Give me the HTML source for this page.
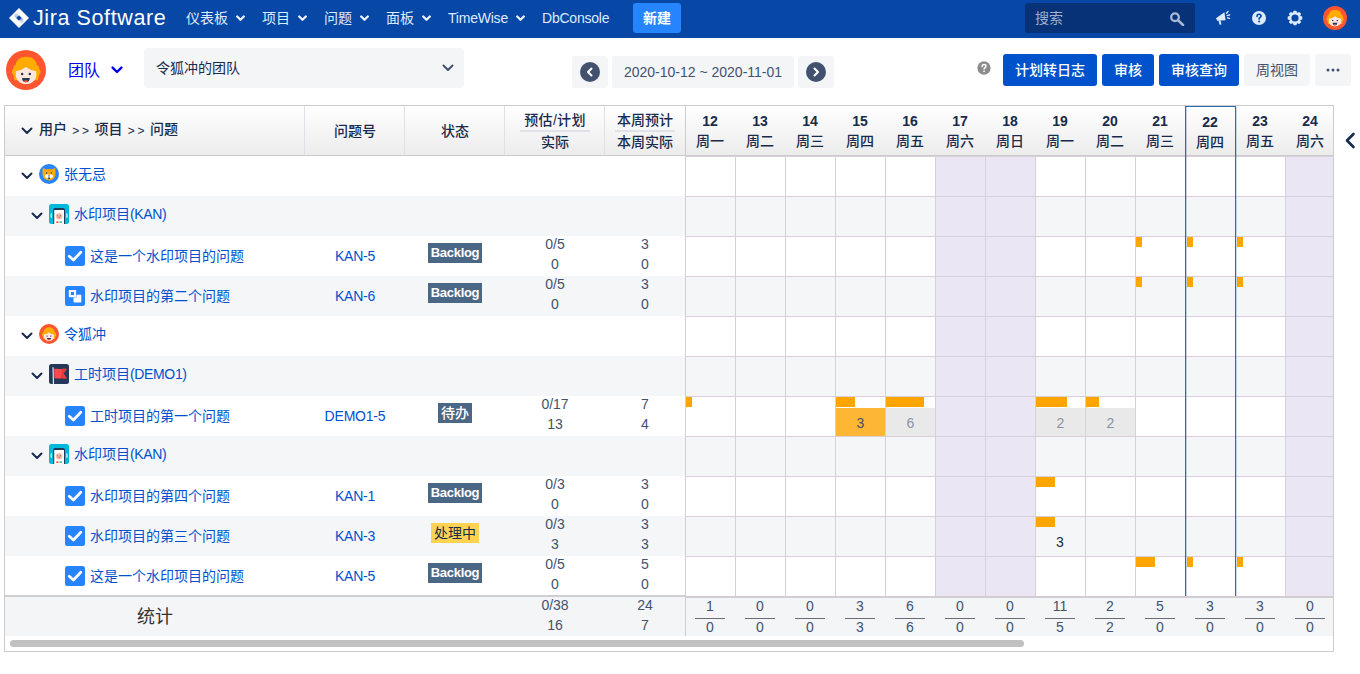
<!DOCTYPE html><html lang="zh-CN"><head><meta charset="utf-8"><title>TimeWise</title><style>
*{box-sizing:border-box;margin:0;padding:0}
html,body{width:1360px;height:674px;overflow:hidden;background:#fff}
body{font-family:"Liberation Sans","Noto Sans CJK SC",sans-serif;font-size:14px;color:#172b4d;position:relative}
.abs{position:absolute}
#nav{position:absolute;left:0;top:0;width:1360px;height:38px;background:#0747a6}
#nav .it{position:absolute;top:0;height:36px;line-height:36px;color:#deebff;font-size:14px;white-space:nowrap}
#nav svg.chv{position:absolute;top:15px}
.btnp{position:absolute;top:54px;height:32px;line-height:32px;border-radius:3px;background:#0052cc;color:#fff;font-weight:500;font-size:14px;text-align:center;white-space:nowrap}
.btng{position:absolute;top:54px;height:32px;line-height:32px;border-radius:3px;background:#f4f5f7;color:#42526e;font-size:14px;text-align:center;white-space:nowrap}
#tbl{position:absolute;left:4px;top:105px;width:1330px;height:547px;border:1px solid #ccc;overflow:hidden;background:#fff}
.row{position:absolute;left:0;width:1328px;height:40px}
.g{background:#f5f6f8}
.lnk{color:#0052cc;letter-spacing:-0.2px}
.c{position:absolute;text-align:center;white-space:nowrap}
.num{color:#42526e;font-size:14px}
.lab{position:absolute;font-size:14px;color:#0052cc;white-space:nowrap;line-height:20px}
.st{position:absolute;height:20px;line-height:19px;font-size:14px;font-weight:bold;color:#fff;background:#42526e;padding:0 3px;white-space:nowrap}
.bar{position:absolute;height:10px;background:#ffa500}
.hd{position:absolute;font-weight:500;font-size:14px;color:#172b4d;text-align:center;white-space:nowrap;line-height:20px}
</style></head><body>
<div id="nav">
<svg class="abs" style="left:8px;top:7px" width="22" height="22" viewBox="0 0 22 22">
<defs><linearGradient id="lg1" x1="0" y1="0" x2="0" y2="1"><stop offset="0" stop-color="#0747a6" stop-opacity="0"/><stop offset="1" stop-color="#0747a6" stop-opacity="0.45"/></linearGradient>
<linearGradient id="lg2" x1="0" y1="1" x2="0" y2="0"><stop offset="0" stop-color="#0747a6" stop-opacity="0"/><stop offset="1" stop-color="#0747a6" stop-opacity="0.45"/></linearGradient></defs>
<path d="M11 1 L21 11 L11 21 L1 11Z" fill="#fff"/>
<path d="M6.6 6.4 L9.9 4.4 L9.9 9.3 L8.2 11 L6.6 9.4Z" fill="url(#lg1)"/>
<path d="M15.4 15.6 L12.1 17.6 L12.1 12.7 L13.8 11 L15.4 12.6Z" fill="url(#lg2)"/>
<path d="M11 8.2 L13.8 11 L11 13.8 L8.2 11Z" fill="#0747a6"/>
</svg>
<div class="abs" style="left:33px;top:0;height:36px;line-height:36px;color:#fff;font-size:21.5px;letter-spacing:0.6px;white-space:nowrap">Jira Software</div>
<div class="it" style="left:186px">仪表板</div>
<svg class="chv" style="left:236px" width="9" height="7" viewBox="0 0 9 7"><path d="M1.2 1.5 L4.5 4.8 L7.8 1.5" fill="none" stroke="#eef3ff" stroke-width="2.3" stroke-linecap="round" stroke-linejoin="round"/></svg>
<div class="it" style="left:262px">项目</div>
<svg class="chv" style="left:298px" width="9" height="7" viewBox="0 0 9 7"><path d="M1.2 1.5 L4.5 4.8 L7.8 1.5" fill="none" stroke="#eef3ff" stroke-width="2.3" stroke-linecap="round" stroke-linejoin="round"/></svg>
<div class="it" style="left:324px">问题</div>
<svg class="chv" style="left:360px" width="9" height="7" viewBox="0 0 9 7"><path d="M1.2 1.5 L4.5 4.8 L7.8 1.5" fill="none" stroke="#eef3ff" stroke-width="2.3" stroke-linecap="round" stroke-linejoin="round"/></svg>
<div class="it" style="left:386px">面板</div>
<svg class="chv" style="left:422px" width="9" height="7" viewBox="0 0 9 7"><path d="M1.2 1.5 L4.5 4.8 L7.8 1.5" fill="none" stroke="#eef3ff" stroke-width="2.3" stroke-linecap="round" stroke-linejoin="round"/></svg>
<div class="it" style="left:448px;letter-spacing:-0.22px">TimeWise</div>
<svg class="chv" style="left:516px" width="9" height="7" viewBox="0 0 9 7"><path d="M1.2 1.5 L4.5 4.8 L7.8 1.5" fill="none" stroke="#eef3ff" stroke-width="2.3" stroke-linecap="round" stroke-linejoin="round"/></svg>
<div class="it" style="left:542px;letter-spacing:-0.22px">DbConsole</div>
<div class="abs" style="left:633px;top:3px;width:48px;height:30px;line-height:31px;border-radius:3px;background:#2684ff;color:#fff;font-weight:bold;font-size:14px;text-align:center">新建</div>
<div class="abs" style="left:1025px;top:3px;width:170px;height:30px;border-radius:3px;background:#083277"></div>
<div class="abs" style="left:1035px;top:3px;height:30px;line-height:31px;color:#9fb0cc;font-size:14px">搜索</div>
<svg class="abs" style="left:1169px;top:10px" width="16" height="16" viewBox="0 0 16 16"><circle cx="6" cy="7.2" r="3.8" fill="none" stroke="#a9b8d4" stroke-width="2.3"/><path d="M9.2 10.4 L14 15" stroke="#a9b8d4" stroke-width="2.6" stroke-linecap="round"/></svg>
<svg class="abs" style="left:1215px;top:10px" width="16" height="16" viewBox="0 0 16 16">
<path d="M1 8.3 L9.4 2.2 L10.6 10.2 L2.2 10.8Z" fill="#deebff"/>
<path d="M3.4 10.6 L5.6 10.4 L6.4 14.4 L4.6 14.8Z" fill="#deebff"/>
<path d="M11.6 3.2 L13 1.4 M12.2 5.6 L14.6 4.8 M12.6 7.8 L14.6 8.4" stroke="#deebff" stroke-width="1.4" stroke-linecap="round"/>
</svg>
<svg class="abs" style="left:1251px;top:10px" width="16" height="16" viewBox="0 0 16 16"><circle cx="8" cy="8" r="7" fill="#deebff"/>
<path d="M6 6.4 C6 5 6.9 4.3 8.1 4.3 C9.3 4.3 10.1 5 10.1 6.1 C10.1 7.4 8.1 7.6 8.1 9.1" fill="none" stroke="#0747a6" stroke-width="1.6" stroke-linecap="round"/><circle cx="8.1" cy="11.5" r="1" fill="#0747a6"/></svg>
<svg class="abs" style="left:1286px;top:9px" width="18" height="18" viewBox="0 0 18 18">
<g fill="#deebff"><circle cx="9" cy="9" r="5.9"/><rect x="7.3" y="1.7" width="3.4" height="3" rx="0.7" transform="rotate(0 9 9)"/><rect x="7.3" y="1.7" width="3.4" height="3" rx="0.7" transform="rotate(45 9 9)"/><rect x="7.3" y="1.7" width="3.4" height="3" rx="0.7" transform="rotate(90 9 9)"/><rect x="7.3" y="1.7" width="3.4" height="3" rx="0.7" transform="rotate(135 9 9)"/><rect x="7.3" y="1.7" width="3.4" height="3" rx="0.7" transform="rotate(180 9 9)"/><rect x="7.3" y="1.7" width="3.4" height="3" rx="0.7" transform="rotate(225 9 9)"/><rect x="7.3" y="1.7" width="3.4" height="3" rx="0.7" transform="rotate(270 9 9)"/><rect x="7.3" y="1.7" width="3.4" height="3" rx="0.7" transform="rotate(315 9 9)"/></g>
<circle cx="9" cy="9" r="3.6" fill="#0747a6"/></svg>
<svg class="abs" style="left:1323px;top:6px" width="24" height="24" viewBox="0 0 40 40">
<circle cx="20" cy="20" r="20" fill="#ff5630"/>
<path d="M10.8 30.2 L8.6 30.2 C7.6 27.6 8 25.6 7.1 24.6 C5.3 23 5.5 20 7.3 19 C7 17 8 15.5 9.6 15 C10.2 10 14.2 6.7 20 6.7 C26.3 6.7 30.3 10 30.9 15 C32.5 15.5 33.4 17 33.1 19 C34.9 20 35.1 23 33.3 24.6 C32.4 25.6 32.8 27.6 31.8 30.2 L29.6 30.2Z" fill="#ffab00"/>
<path d="M9.8 21.2 Q15.5 20.6 19.9 17 Q24.5 20.6 30.3 21.2 L30.3 25 C30.3 30.4 25.6 34.1 20.05 34.1 C14.5 34.1 9.8 30.4 9.8 25Z" fill="#ffe6dc"/>
<circle cx="16.1" cy="24.1" r="1.25" fill="#253858"/><circle cx="23.8" cy="24.1" r="1.25" fill="#253858"/>
<path d="M16 27.9 L23.8 27.9 C23.8 30.6 22.1 32.3 19.9 32.3 C17.7 32.3 16 30.6 16 27.9Z" fill="#253858"/>
<path d="M17.7 31 C18.8 29.9 21 29.9 22.1 31 C21.4 32 20.6 32.3 19.9 32.3 C19.2 32.3 18.4 32 17.7 31Z" fill="#ff5630"/>
</svg>
</div>
<svg class="abs" style="left:6px;top:50px" width="40" height="40" viewBox="0 0 40 40">
<circle cx="20" cy="20" r="20" fill="#ff5630"/>
<path d="M10.8 30.2 L8.6 30.2 C7.6 27.6 8 25.6 7.1 24.6 C5.3 23 5.5 20 7.3 19 C7 17 8 15.5 9.6 15 C10.2 10 14.2 6.7 20 6.7 C26.3 6.7 30.3 10 30.9 15 C32.5 15.5 33.4 17 33.1 19 C34.9 20 35.1 23 33.3 24.6 C32.4 25.6 32.8 27.6 31.8 30.2 L29.6 30.2Z" fill="#ffab00"/>
<path d="M9.8 21.2 Q15.5 20.6 19.9 17 Q24.5 20.6 30.3 21.2 L30.3 25 C30.3 30.4 25.6 34.1 20.05 34.1 C14.5 34.1 9.8 30.4 9.8 25Z" fill="#ffe6dc"/>
<circle cx="16.1" cy="24.1" r="1.25" fill="#253858"/><circle cx="23.8" cy="24.1" r="1.25" fill="#253858"/>
<path d="M16 27.9 L23.8 27.9 C23.8 30.6 22.1 32.3 19.9 32.3 C17.7 32.3 16 30.6 16 27.9Z" fill="#253858"/>
<path d="M17.7 31 C18.8 29.9 21 29.9 22.1 31 C21.4 32 20.6 32.3 19.9 32.3 C19.2 32.3 18.4 32 17.7 31Z" fill="#ff5630"/>
</svg>
<div class="abs" style="left:68px;top:60px;font-size:16px;line-height:22px;color:#0000ee;white-space:nowrap">团队</div>
<svg class="abs" style="left:111px;top:66px" width="12" height="9" viewBox="0 0 12 9"><path d="M1.6 1.6 L6 6 L10.4 1.6" fill="none" stroke="#0000ee" stroke-width="2.4" stroke-linecap="round" stroke-linejoin="round"/></svg>
<div class="abs" style="left:144px;top:48px;width:320px;height:40px;border-radius:3px;background:#f4f5f7"></div>
<div class="abs" style="left:156px;top:48px;height:40px;line-height:41px;font-size:14px;color:#172b4d">令狐冲的团队</div>
<svg class="abs" style="left:442px;top:64px" width="12" height="8" viewBox="0 0 12 8"><path d="M1.5 1.5 L6 6 L10.5 1.5" fill="none" stroke="#42526e" stroke-width="2" stroke-linecap="round" stroke-linejoin="round"/></svg>
<div class="abs" style="left:572px;top:56px;width:36px;height:32px;border-radius:3px;background:#f4f5f7"></div>
<svg class="abs" style="left:580px;top:62px" width="20" height="20" viewBox="0 0 20 20"><circle cx="10" cy="10" r="10" fill="#42526e"/><path d="M11.5 6.5 L8 10 L11.5 13.5" fill="none" stroke="#fff" stroke-width="2" stroke-linecap="round" stroke-linejoin="round"/></svg>
<div class="abs" style="left:612px;top:56px;width:182px;height:32px;line-height:32px;border-radius:3px;background:#f4f5f7;color:#42526e;font-size:14px;text-align:center;white-space:nowrap">2020-10-12 ~ 2020-11-01</div>
<div class="abs" style="left:798px;top:56px;width:36px;height:32px;border-radius:3px;background:#f4f5f7"></div>
<svg class="abs" style="left:806px;top:62px" width="20" height="20" viewBox="0 0 20 20"><circle cx="10" cy="10" r="10" fill="#42526e"/><path d="M8.5 6.5 L12 10 L8.5 13.5" fill="none" stroke="#fff" stroke-width="2" stroke-linecap="round" stroke-linejoin="round"/></svg>
<svg class="abs" style="left:977px;top:61px" width="14" height="14" viewBox="0 0 16 16"><circle cx="8" cy="8" r="7.6" fill="#8c8c8c"/>
<path d="M5.9 6.3 C5.9 4.9 6.9 4.1 8.1 4.1 C9.3 4.1 10.2 4.9 10.2 6 C10.2 7.4 8.1 7.6 8.1 9.2" fill="none" stroke="#fff" stroke-width="1.7" stroke-linecap="round"/><circle cx="8.1" cy="11.8" r="1.05" fill="#fff"/></svg>
<div class="btnp" style="left:1003px;width:94px">计划转日志</div>
<div class="btnp" style="left:1102px;width:52px">审核</div>
<div class="btnp" style="left:1159px;width:80px">审核查询</div>
<div class="btng" style="left:1244px;width:66px">周视图</div>
<div class="btng" style="left:1315px;width:36px"></div>
<svg class="abs" style="left:1326px;top:68px" width="14" height="4" viewBox="0 0 14 4"><circle cx="2" cy="2" r="1.5" fill="#42526e"/><circle cx="7" cy="2" r="1.5" fill="#42526e"/><circle cx="12" cy="2" r="1.5" fill="#42526e"/></svg>
<svg class="abs" style="left:1344px;top:132px" width="12" height="17" viewBox="0 0 12 17"><path d="M9.5 2 L3 8.5 L9.5 15" fill="none" stroke="#172b4d" stroke-width="2.6" stroke-linecap="round" stroke-linejoin="round"/></svg>
<div id="tbl">
<div class="abs" style="left:0;top:0;width:1328px;height:49px;background:linear-gradient(#ffffff 0%,#ececec 100%)"></div>
<div class="abs" style="left:0;top:49px;width:1328px;height:1px;background:#ccc"></div>
<div class="abs" style="left:299px;top:0;width:1px;height:49px;background:#dfe1e6"></div>
<div class="abs" style="left:399px;top:0;width:1px;height:49px;background:#dfe1e6"></div>
<div class="abs" style="left:499px;top:0;width:1px;height:49px;background:#dfe1e6"></div>
<div class="abs" style="left:599px;top:0;width:1px;height:49px;background:#dfe1e6"></div>
<div class="abs" style="left:680px;top:0;width:1px;height:49px;background:#ccc"></div>
<svg class="abs" style="left:16px;top:21px" width="12" height="8" viewBox="0 0 12 8"><path d="M1.5 1.5 L6 6 L10.5 1.5" fill="none" stroke="#172b4d" stroke-width="2" stroke-linecap="round" stroke-linejoin="round"/></svg>
<div class="hd" style="left:34px;top:13px;text-align:left">用户</div>
<div class="hd" style="left:67.2px;top:14.5px;text-align:left;font-weight:normal;font-size:12px;letter-spacing:2.7px">&gt;&gt;</div>
<div class="hd" style="left:89.5px;top:13px;text-align:left">项目</div>
<div class="hd" style="left:122.7px;top:14.5px;text-align:left;font-weight:normal;font-size:12px;letter-spacing:2.7px">&gt;&gt;</div>
<div class="hd" style="left:145px;top:13px;text-align:left">问题</div>
<div class="hd" style="left:300px;width:100px;top:15px">问题号</div>
<div class="hd" style="left:400px;width:100px;top:15px">状态</div>
<div class="hd" style="left:500px;width:100px;top:4px;letter-spacing:0.3px">预估/计划</div>
<div class="abs" style="left:515px;top:24px;width:70px;height:2px;background:#e0e2e7"></div>
<div class="hd" style="left:500px;width:100px;top:26px">实际</div>
<div class="hd" style="left:600px;width:80px;top:4px">本周预计</div>
<div class="abs" style="left:610px;top:24px;width:60px;height:2px;background:#e0e2e7"></div>
<div class="hd" style="left:600px;width:80px;top:26px">本周实际</div>
<div class="hd" style="left:680px;width:50px;top:5px;font-weight:bold">12</div>
<div class="hd" style="left:680px;width:50px;top:24.5px">周一</div>
<div class="hd" style="left:730px;width:50px;top:5px;font-weight:bold">13</div>
<div class="hd" style="left:730px;width:50px;top:24.5px">周二</div>
<div class="hd" style="left:780px;width:50px;top:5px;font-weight:bold">14</div>
<div class="hd" style="left:780px;width:50px;top:24.5px">周三</div>
<div class="hd" style="left:830px;width:50px;top:5px;font-weight:bold">15</div>
<div class="hd" style="left:830px;width:50px;top:24.5px">周四</div>
<div class="hd" style="left:880px;width:50px;top:5px;font-weight:bold">16</div>
<div class="hd" style="left:880px;width:50px;top:24.5px">周五</div>
<div class="hd" style="left:930px;width:50px;top:5px;font-weight:bold">17</div>
<div class="hd" style="left:930px;width:50px;top:24.5px">周六</div>
<div class="hd" style="left:980px;width:50px;top:5px;font-weight:bold">18</div>
<div class="hd" style="left:980px;width:50px;top:24.5px">周日</div>
<div class="hd" style="left:1030px;width:50px;top:5px;font-weight:bold">19</div>
<div class="hd" style="left:1030px;width:50px;top:24.5px">周一</div>
<div class="hd" style="left:1080px;width:50px;top:5px;font-weight:bold">20</div>
<div class="hd" style="left:1080px;width:50px;top:24.5px">周二</div>
<div class="hd" style="left:1130px;width:50px;top:5px;font-weight:bold">21</div>
<div class="hd" style="left:1130px;width:50px;top:24.5px">周三</div>
<div class="hd" style="left:1180px;width:50px;top:6px;font-weight:bold">22</div>
<div class="hd" style="left:1180px;width:50px;top:25.5px">周四</div>
<div class="hd" style="left:1230px;width:50px;top:5px;font-weight:bold">23</div>
<div class="hd" style="left:1230px;width:50px;top:24.5px">周五</div>
<div class="hd" style="left:1280px;width:50px;top:5px;font-weight:bold">24</div>
<div class="hd" style="left:1280px;width:50px;top:24.5px">周六</div>
<div class="row" style="top:50px">
<svg class="abs" style="left:16px;top:16px" width="12" height="8" viewBox="0 0 12 8"><path d="M1.5 1.5 L6 6 L10.5 1.5" fill="none" stroke="#172b4d" stroke-width="2" stroke-linecap="round" stroke-linejoin="round"/></svg>
<svg class="abs" style="left:34px;top:8px" width="20" height="20" viewBox="0 0 20 20">
<circle cx="10" cy="10" r="10" fill="#2684ff"/>
<path d="M3.9 4 L7.2 5.4 C9 4.9 11 4.9 12.8 5.4 L16.1 4 C16.6 6.5 16.7 9 16.3 11.5 C15.8 14.6 13.4 16.4 10 16.4 C6.6 16.4 4.2 14.6 3.7 11.5 C3.3 9 3.4 6.5 3.9 4Z" fill="#ffab00"/>
<path d="M9 5.3 L9.4 7.2 M10 5.2 L10 7.4 M11 5.3 L10.6 7.2" stroke="#ff8b00" stroke-width="0.6" fill="none"/>
<circle cx="8.1" cy="12.3" r="2.1" fill="#fff"/><circle cx="11.9" cy="12.3" r="2.1" fill="#fff"/>
<circle cx="7.6" cy="9" r="0.75" fill="#253858"/><circle cx="12.4" cy="9" r="0.75" fill="#253858"/>
<path d="M9 11.6 L11 11.6 L10 12.9Z" fill="#253858"/>
<ellipse cx="10" cy="14.3" rx="0.9" ry="1" fill="#253858"/>
</svg>
<div class="lab" style="left:59px;top:8px">张无忌</div>
</div>
<div class="row g" style="top:90px">
<svg class="abs" style="left:26px;top:16px" width="12" height="8" viewBox="0 0 12 8"><path d="M1.5 1.5 L6 6 L10.5 1.5" fill="none" stroke="#172b4d" stroke-width="2" stroke-linecap="round" stroke-linejoin="round"/></svg>
<svg class="abs" style="left:44px;top:8px" width="20" height="20" viewBox="0 0 20 20">
<rect width="20" height="20" rx="2.5" fill="#00b8d9"/>
<path d="M4.2 20 L4.2 6 C4.2 4.9 5.1 4 6.2 4 L14 4 C15.1 4 16 4.9 16 6 L16 20Z" fill="#253858"/>
<rect x="5.2" y="6" width="9.8" height="14" fill="#fafbfc"/>
<circle cx="10.1" cy="12.2" r="3.2" fill="#ffbdad"/>
<circle cx="8.8" cy="11.7" r="0.5" fill="#253858"/><circle cx="11.4" cy="11.7" r="0.5" fill="#253858"/>
<circle cx="10.1" cy="13.3" r="0.8" fill="#ff5630"/>
<rect x="7.3" y="17.4" width="2.2" height="1.6" fill="#ff5630"/><rect x="10.5" y="17.4" width="2.4" height="1.6" fill="#36c5a0"/>
<path d="M2.6 9.6 C1.9 11 1.9 12.4 2.6 13.8 M17.6 9.6 C18.3 11 18.3 12.4 17.6 13.8" fill="none" stroke="#e6fcff" stroke-width="1.1"/>
</svg>
<div class="lab" style="left:69px;top:8px">水印项目<span style="letter-spacing:-0.35px">(KAN)</span></div>
</div>
<div class="row" style="top:130px">
<svg class="abs" style="left:60px;top:10px" width="20" height="20" viewBox="0 0 20 20">
<rect width="20" height="20" rx="2.5" fill="#2684ff"/>
<path d="M4.2 10.2 L8.4 14 L15.8 6.2" fill="none" stroke="#fff" stroke-width="2.7" stroke-linecap="round" stroke-linejoin="round"/>
</svg>
<div class="lab" style="left:85px;top:10px">这是一个水印项目的问题</div>
<div class="c lnk" style="left:300px;width:100px;top:10px;line-height:20px">KAN-5</div>
<div class="abs" style="left:423px;top:7px;width:54px;height:20px;line-height:20px;text-align:center;background:#4a6785;color:#fff;font-weight:bold;font-size:13px;letter-spacing:-0.3px;white-space:nowrap">Backlog</div>
<div class="c num" style="left:500px;width:100px;top:-2px;line-height:20px">0/5</div>
<div class="c num" style="left:500px;width:100px;top:18px;line-height:20px">0</div>
<div class="c num" style="left:600px;width:80px;top:-2px;line-height:20px">3</div>
<div class="c num" style="left:600px;width:80px;top:18px;line-height:20px">0</div>
</div>
<div class="row g" style="top:170px">
<svg class="abs" style="left:60px;top:10px" width="20" height="20" viewBox="0 0 20 20">
<rect width="20" height="20" rx="2.5" fill="#2684ff"/>
<rect x="8.5" y="8.7" width="7.8" height="7.7" rx="0.7" fill="#fff"/>
<rect x="3.4" y="3.5" width="8.1" height="8.1" rx="0.9" fill="#2684ff"/>
<rect x="3.8" y="3.9" width="7.3" height="7.3" rx="0.7" fill="#fff"/>
<rect x="5.9" y="6" width="3.1" height="3.1" fill="#2684ff"/>
</svg>
<div class="lab" style="left:85px;top:10px">水印项目的第二个问题</div>
<div class="c lnk" style="left:300px;width:100px;top:10px;line-height:20px">KAN-6</div>
<div class="abs" style="left:423px;top:7px;width:54px;height:20px;line-height:20px;text-align:center;background:#4a6785;color:#fff;font-weight:bold;font-size:13px;letter-spacing:-0.3px;white-space:nowrap">Backlog</div>
<div class="c num" style="left:500px;width:100px;top:-2px;line-height:20px">0/5</div>
<div class="c num" style="left:500px;width:100px;top:18px;line-height:20px">0</div>
<div class="c num" style="left:600px;width:80px;top:-2px;line-height:20px">3</div>
<div class="c num" style="left:600px;width:80px;top:18px;line-height:20px">0</div>
</div>
<div class="row" style="top:210px">
<svg class="abs" style="left:16px;top:16px" width="12" height="8" viewBox="0 0 12 8"><path d="M1.5 1.5 L6 6 L10.5 1.5" fill="none" stroke="#172b4d" stroke-width="2" stroke-linecap="round" stroke-linejoin="round"/></svg>
<svg class="abs" style="left:34px;top:8px" width="20" height="20" viewBox="0 0 40 40">
<circle cx="20" cy="20" r="20" fill="#ff5630"/>
<path d="M10.8 30.2 L8.6 30.2 C7.6 27.6 8 25.6 7.1 24.6 C5.3 23 5.5 20 7.3 19 C7 17 8 15.5 9.6 15 C10.2 10 14.2 6.7 20 6.7 C26.3 6.7 30.3 10 30.9 15 C32.5 15.5 33.4 17 33.1 19 C34.9 20 35.1 23 33.3 24.6 C32.4 25.6 32.8 27.6 31.8 30.2 L29.6 30.2Z" fill="#ffab00"/>
<path d="M9.8 21.2 Q15.5 20.6 19.9 17 Q24.5 20.6 30.3 21.2 L30.3 25 C30.3 30.4 25.6 34.1 20.05 34.1 C14.5 34.1 9.8 30.4 9.8 25Z" fill="#ffe6dc"/>
<circle cx="16.1" cy="24.1" r="1.25" fill="#253858"/><circle cx="23.8" cy="24.1" r="1.25" fill="#253858"/>
<path d="M16 27.9 L23.8 27.9 C23.8 30.6 22.1 32.3 19.9 32.3 C17.7 32.3 16 30.6 16 27.9Z" fill="#253858"/>
<path d="M17.7 31 C18.8 29.9 21 29.9 22.1 31 C21.4 32 20.6 32.3 19.9 32.3 C19.2 32.3 18.4 32 17.7 31Z" fill="#ff5630"/>
</svg>
<div class="lab" style="left:59px;top:8px">令狐冲</div>
</div>
<div class="row g" style="top:250px">
<svg class="abs" style="left:26px;top:16px" width="12" height="8" viewBox="0 0 12 8"><path d="M1.5 1.5 L6 6 L10.5 1.5" fill="none" stroke="#172b4d" stroke-width="2" stroke-linecap="round" stroke-linejoin="round"/></svg>
<svg class="abs" style="left:44px;top:8px" width="20" height="20" viewBox="0 0 20 20">
<rect width="20" height="20" rx="2.5" fill="#253858"/>
<path d="M3.5 3.3 L4.6 3.3 L5 20 L3.9 20Z" fill="#dffaff"/>
<path d="M5.2 5 C8 4.2 10.5 5.4 13 4.9 C14.6 4.6 16.2 4.6 17.7 4.9 L14.6 9.6 L17.7 14.2 C15.5 14.6 13.5 14.2 11.5 14.4 C9.3 14.6 7.3 14.4 5.4 14.2Z" fill="#ff4848"/>
<path d="M11.5 14.4 C12.5 12 12.6 8 13 4.9 C14.6 4.6 16.2 4.6 17.7 4.9 L14.6 9.6 L17.7 14.2 C15.5 14.6 13.5 14.2 11.5 14.4Z" fill="#e23a3e"/>
</svg>
<div class="lab" style="left:69px;top:8px">工时项目<span style="letter-spacing:-0.35px">(DEMO1)</span></div>
</div>
<div class="row" style="top:290px">
<svg class="abs" style="left:60px;top:10px" width="20" height="20" viewBox="0 0 20 20">
<rect width="20" height="20" rx="2.5" fill="#2684ff"/>
<path d="M4.2 10.2 L8.4 14 L15.8 6.2" fill="none" stroke="#fff" stroke-width="2.7" stroke-linecap="round" stroke-linejoin="round"/>
</svg>
<div class="lab" style="left:85px;top:10px">工时项目的第一个问题</div>
<div class="c lnk" style="left:300px;width:100px;top:10px;line-height:20px">DEMO1-5</div>
<div class="abs" style="left:433px;top:7px;width:34px;height:20px;line-height:20px;text-align:center;background:#4a6785;color:#fff;font-weight:500;font-size:14px;white-space:nowrap">待办</div>
<div class="c num" style="left:500px;width:100px;top:-2px;line-height:20px">0/17</div>
<div class="c num" style="left:500px;width:100px;top:18px;line-height:20px">13</div>
<div class="c num" style="left:600px;width:80px;top:-2px;line-height:20px">7</div>
<div class="c num" style="left:600px;width:80px;top:18px;line-height:20px">4</div>
</div>
<div class="row g" style="top:330px">
<svg class="abs" style="left:26px;top:16px" width="12" height="8" viewBox="0 0 12 8"><path d="M1.5 1.5 L6 6 L10.5 1.5" fill="none" stroke="#172b4d" stroke-width="2" stroke-linecap="round" stroke-linejoin="round"/></svg>
<svg class="abs" style="left:44px;top:8px" width="20" height="20" viewBox="0 0 20 20">
<rect width="20" height="20" rx="2.5" fill="#00b8d9"/>
<path d="M4.2 20 L4.2 6 C4.2 4.9 5.1 4 6.2 4 L14 4 C15.1 4 16 4.9 16 6 L16 20Z" fill="#253858"/>
<rect x="5.2" y="6" width="9.8" height="14" fill="#fafbfc"/>
<circle cx="10.1" cy="12.2" r="3.2" fill="#ffbdad"/>
<circle cx="8.8" cy="11.7" r="0.5" fill="#253858"/><circle cx="11.4" cy="11.7" r="0.5" fill="#253858"/>
<circle cx="10.1" cy="13.3" r="0.8" fill="#ff5630"/>
<rect x="7.3" y="17.4" width="2.2" height="1.6" fill="#ff5630"/><rect x="10.5" y="17.4" width="2.4" height="1.6" fill="#36c5a0"/>
<path d="M2.6 9.6 C1.9 11 1.9 12.4 2.6 13.8 M17.6 9.6 C18.3 11 18.3 12.4 17.6 13.8" fill="none" stroke="#e6fcff" stroke-width="1.1"/>
</svg>
<div class="lab" style="left:69px;top:8px">水印项目<span style="letter-spacing:-0.35px">(KAN)</span></div>
</div>
<div class="row" style="top:370px">
<svg class="abs" style="left:60px;top:10px" width="20" height="20" viewBox="0 0 20 20">
<rect width="20" height="20" rx="2.5" fill="#2684ff"/>
<path d="M4.2 10.2 L8.4 14 L15.8 6.2" fill="none" stroke="#fff" stroke-width="2.7" stroke-linecap="round" stroke-linejoin="round"/>
</svg>
<div class="lab" style="left:85px;top:10px">水印项目的第四个问题</div>
<div class="c lnk" style="left:300px;width:100px;top:10px;line-height:20px">KAN-1</div>
<div class="abs" style="left:423px;top:7px;width:54px;height:20px;line-height:20px;text-align:center;background:#4a6785;color:#fff;font-weight:bold;font-size:13px;letter-spacing:-0.3px;white-space:nowrap">Backlog</div>
<div class="c num" style="left:500px;width:100px;top:-2px;line-height:20px">0/3</div>
<div class="c num" style="left:500px;width:100px;top:18px;line-height:20px">0</div>
<div class="c num" style="left:600px;width:80px;top:-2px;line-height:20px">3</div>
<div class="c num" style="left:600px;width:80px;top:18px;line-height:20px">0</div>
</div>
<div class="row g" style="top:410px">
<svg class="abs" style="left:60px;top:10px" width="20" height="20" viewBox="0 0 20 20">
<rect width="20" height="20" rx="2.5" fill="#2684ff"/>
<path d="M4.2 10.2 L8.4 14 L15.8 6.2" fill="none" stroke="#fff" stroke-width="2.7" stroke-linecap="round" stroke-linejoin="round"/>
</svg>
<div class="lab" style="left:85px;top:10px">水印项目的第三个问题</div>
<div class="c lnk" style="left:300px;width:100px;top:10px;line-height:20px">KAN-3</div>
<div class="abs" style="left:426px;top:7px;width:48px;height:20px;line-height:20px;text-align:center;background:#ffd351;color:#172b4d;font-size:14px;white-space:nowrap">处理中</div>
<div class="c num" style="left:500px;width:100px;top:-2px;line-height:20px">0/3</div>
<div class="c num" style="left:500px;width:100px;top:18px;line-height:20px">3</div>
<div class="c num" style="left:600px;width:80px;top:-2px;line-height:20px">3</div>
<div class="c num" style="left:600px;width:80px;top:18px;line-height:20px">3</div>
</div>
<div class="row" style="top:450px">
<svg class="abs" style="left:60px;top:10px" width="20" height="20" viewBox="0 0 20 20">
<rect width="20" height="20" rx="2.5" fill="#2684ff"/>
<path d="M4.2 10.2 L8.4 14 L15.8 6.2" fill="none" stroke="#fff" stroke-width="2.7" stroke-linecap="round" stroke-linejoin="round"/>
</svg>
<div class="lab" style="left:85px;top:10px">这是一个水印项目的问题</div>
<div class="c lnk" style="left:300px;width:100px;top:10px;line-height:20px">KAN-5</div>
<div class="abs" style="left:423px;top:7px;width:54px;height:20px;line-height:20px;text-align:center;background:#4a6785;color:#fff;font-weight:bold;font-size:13px;letter-spacing:-0.3px;white-space:nowrap">Backlog</div>
<div class="c num" style="left:500px;width:100px;top:-2px;line-height:20px">0/5</div>
<div class="c num" style="left:500px;width:100px;top:18px;line-height:20px">0</div>
<div class="c num" style="left:600px;width:80px;top:-2px;line-height:20px">5</div>
<div class="c num" style="left:600px;width:80px;top:18px;line-height:20px">0</div>
</div>
<div class="abs" style="left:930px;top:50px;width:50px;height:440px;background:#eae6f3"></div>
<div class="abs" style="left:980px;top:50px;width:50px;height:440px;background:#eae6f3"></div>
<div class="abs" style="left:1280px;top:50px;width:50px;height:440px;background:#eae6f3"></div>
<div class="abs" style="left:831px;top:302px;width:49px;height:28px;background:#fdb735;color:#42526e;text-align:center;line-height:30px;font-size:14px">3</div>
<div class="abs" style="left:881px;top:302px;width:49px;height:28px;background:#e9e9e9;color:#8993a4;text-align:center;line-height:30px;font-size:14px">6</div>
<div class="abs" style="left:1031px;top:302px;width:49px;height:28px;background:#e9e9e9;color:#8993a4;text-align:center;line-height:30px;font-size:14px">2</div>
<div class="abs" style="left:1081px;top:302px;width:49px;height:28px;background:#e9e9e9;color:#8993a4;text-align:center;line-height:30px;font-size:14px">2</div>
<div class="c num" style="left:1030px;width:50px;top:426px;line-height:20px;color:#172b4d">3</div>
<div class="abs" style="left:680px;top:50px;width:1px;height:440px;background:#cfcfcf"></div>
<div class="abs" style="left:730px;top:50px;width:1px;height:440px;background:#d9cfdb"></div>
<div class="abs" style="left:780px;top:50px;width:1px;height:440px;background:#d9cfdb"></div>
<div class="abs" style="left:830px;top:50px;width:1px;height:440px;background:#d9cfdb"></div>
<div class="abs" style="left:880px;top:50px;width:1px;height:440px;background:#d9cfdb"></div>
<div class="abs" style="left:930px;top:50px;width:1px;height:440px;background:#d9cfdb"></div>
<div class="abs" style="left:980px;top:50px;width:1px;height:440px;background:#d9cfdb"></div>
<div class="abs" style="left:1030px;top:50px;width:1px;height:440px;background:#d9cfdb"></div>
<div class="abs" style="left:1080px;top:50px;width:1px;height:440px;background:#d9cfdb"></div>
<div class="abs" style="left:1130px;top:50px;width:1px;height:440px;background:#d9cfdb"></div>
<div class="abs" style="left:1180px;top:50px;width:1px;height:440px;background:#d9cfdb"></div>
<div class="abs" style="left:1230px;top:50px;width:1px;height:440px;background:#d9cfdb"></div>
<div class="abs" style="left:1280px;top:50px;width:1px;height:440px;background:#d9cfdb"></div>
<div class="abs" style="left:1330px;top:50px;width:1px;height:440px;background:#d9cfdb"></div>
<div class="abs" style="left:680px;top:50px;width:650px;height:1px;background:#d9cfdb"></div>
<div class="abs" style="left:680px;top:90px;width:650px;height:1px;background:#d9cfdb"></div>
<div class="abs" style="left:680px;top:130px;width:650px;height:1px;background:#d9cfdb"></div>
<div class="abs" style="left:680px;top:170px;width:650px;height:1px;background:#d9cfdb"></div>
<div class="abs" style="left:680px;top:210px;width:650px;height:1px;background:#d9cfdb"></div>
<div class="abs" style="left:680px;top:250px;width:650px;height:1px;background:#d9cfdb"></div>
<div class="abs" style="left:680px;top:290px;width:650px;height:1px;background:#d9cfdb"></div>
<div class="abs" style="left:680px;top:330px;width:650px;height:1px;background:#d9cfdb"></div>
<div class="abs" style="left:680px;top:370px;width:650px;height:1px;background:#d9cfdb"></div>
<div class="abs" style="left:680px;top:410px;width:650px;height:1px;background:#d9cfdb"></div>
<div class="abs" style="left:680px;top:450px;width:650px;height:1px;background:#d9cfdb"></div>
<div class="bar" style="left:1131px;top:131px;width:6.25px"></div>
<div class="bar" style="left:1182px;top:131px;width:6.25px"></div>
<div class="bar" style="left:1232px;top:131px;width:6.25px"></div>
<div class="bar" style="left:1131px;top:171px;width:6.25px"></div>
<div class="bar" style="left:1182px;top:171px;width:6.25px"></div>
<div class="bar" style="left:1232px;top:171px;width:6.25px"></div>
<div class="bar" style="left:681px;top:291px;width:6.25px"></div>
<div class="bar" style="left:831px;top:291px;width:18.75px"></div>
<div class="bar" style="left:881px;top:291px;width:37.50px"></div>
<div class="bar" style="left:1031px;top:291px;width:31.25px"></div>
<div class="bar" style="left:1081px;top:291px;width:12.50px"></div>
<div class="bar" style="left:1031px;top:371px;width:18.75px"></div>
<div class="bar" style="left:1031px;top:411px;width:18.75px"></div>
<div class="bar" style="left:1131px;top:451px;width:18.75px"></div>
<div class="bar" style="left:1182px;top:451px;width:6.25px"></div>
<div class="bar" style="left:1232px;top:451px;width:6.25px"></div>
<div class="abs" style="left:1180px;top:0;width:51px;height:490px;border:1px solid #2d6cb5;border-bottom:none"></div>
<div class="abs" style="left:1181px;top:1px;width:1px;height:489px;background:rgba(45,108,181,0.3)"></div>
<div class="abs" style="left:1231px;top:1px;width:1px;height:489px;background:rgba(45,108,181,0.25)"></div>
<div class="abs" style="left:0;top:491px;width:1328px;height:39px;background:#f4f5f7"></div>
<div class="abs" style="left:0;top:489px;width:680px;height:2px;background:#cfcfd1"></div>
<div class="abs" style="left:680px;top:490px;width:650px;height:2px;background:#d2ccd4"></div>
<div class="abs" style="left:680px;top:489px;width:1px;height:41px;background:#ccc"></div>
<div class="c" style="left:0;width:300px;top:498px;font-size:18px;line-height:26px;color:#333">统计</div>
<div class="c num" style="left:500px;width:100px;top:489px;line-height:20px">0/38</div>
<div class="c num" style="left:500px;width:100px;top:509px;line-height:20px">16</div>
<div class="c num" style="left:600px;width:80px;top:489px;line-height:20px">24</div>
<div class="c num" style="left:600px;width:80px;top:509px;line-height:20px">7</div>
<div class="c num" style="left:680px;width:50px;top:490px;line-height:20px">1</div>
<div class="abs" style="left:690px;top:512px;width:30px;height:1px;background:#6b6b78"></div>
<div class="c num" style="left:680px;width:50px;top:511px;line-height:20px">0</div>
<div class="c num" style="left:730px;width:50px;top:490px;line-height:20px">0</div>
<div class="abs" style="left:740px;top:512px;width:30px;height:1px;background:#6b6b78"></div>
<div class="c num" style="left:730px;width:50px;top:511px;line-height:20px">0</div>
<div class="c num" style="left:780px;width:50px;top:490px;line-height:20px">0</div>
<div class="abs" style="left:790px;top:512px;width:30px;height:1px;background:#6b6b78"></div>
<div class="c num" style="left:780px;width:50px;top:511px;line-height:20px">0</div>
<div class="c num" style="left:830px;width:50px;top:490px;line-height:20px">3</div>
<div class="abs" style="left:840px;top:512px;width:30px;height:1px;background:#6b6b78"></div>
<div class="c num" style="left:830px;width:50px;top:511px;line-height:20px">3</div>
<div class="c num" style="left:880px;width:50px;top:490px;line-height:20px">6</div>
<div class="abs" style="left:890px;top:512px;width:30px;height:1px;background:#6b6b78"></div>
<div class="c num" style="left:880px;width:50px;top:511px;line-height:20px">6</div>
<div class="c num" style="left:930px;width:50px;top:490px;line-height:20px">0</div>
<div class="abs" style="left:940px;top:512px;width:30px;height:1px;background:#6b6b78"></div>
<div class="c num" style="left:930px;width:50px;top:511px;line-height:20px">0</div>
<div class="c num" style="left:980px;width:50px;top:490px;line-height:20px">0</div>
<div class="abs" style="left:990px;top:512px;width:30px;height:1px;background:#6b6b78"></div>
<div class="c num" style="left:980px;width:50px;top:511px;line-height:20px">0</div>
<div class="c num" style="left:1030px;width:50px;top:490px;line-height:20px">11</div>
<div class="abs" style="left:1040px;top:512px;width:30px;height:1px;background:#6b6b78"></div>
<div class="c num" style="left:1030px;width:50px;top:511px;line-height:20px">5</div>
<div class="c num" style="left:1080px;width:50px;top:490px;line-height:20px">2</div>
<div class="abs" style="left:1090px;top:512px;width:30px;height:1px;background:#6b6b78"></div>
<div class="c num" style="left:1080px;width:50px;top:511px;line-height:20px">2</div>
<div class="c num" style="left:1130px;width:50px;top:490px;line-height:20px">5</div>
<div class="abs" style="left:1140px;top:512px;width:30px;height:1px;background:#6b6b78"></div>
<div class="c num" style="left:1130px;width:50px;top:511px;line-height:20px">0</div>
<div class="c num" style="left:1180px;width:50px;top:490px;line-height:20px">3</div>
<div class="abs" style="left:1190px;top:512px;width:30px;height:1px;background:#6b6b78"></div>
<div class="c num" style="left:1180px;width:50px;top:511px;line-height:20px">0</div>
<div class="c num" style="left:1230px;width:50px;top:490px;line-height:20px">3</div>
<div class="abs" style="left:1240px;top:512px;width:30px;height:1px;background:#6b6b78"></div>
<div class="c num" style="left:1230px;width:50px;top:511px;line-height:20px">0</div>
<div class="c num" style="left:1280px;width:50px;top:490px;line-height:20px">0</div>
<div class="abs" style="left:1290px;top:512px;width:30px;height:1px;background:#6b6b78"></div>
<div class="c num" style="left:1280px;width:50px;top:511px;line-height:20px">0</div>
<div class="abs" style="left:0;top:530px;width:1328px;height:16px;background:#fff"></div>
<div class="abs" style="left:5px;top:534px;width:1014px;height:7px;border-radius:4px;background:#c1c1c1"></div>
</div>
</body></html>
